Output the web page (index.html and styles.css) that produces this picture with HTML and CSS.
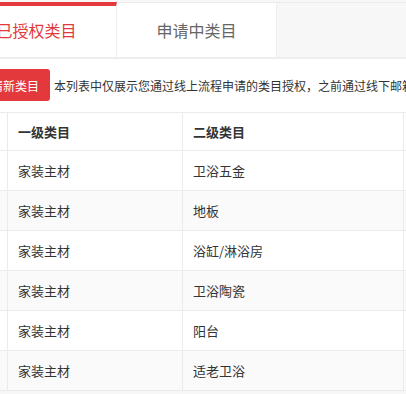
FILE: index.html
```html
<!DOCTYPE html>
<html lang="zh-CN">
<head>
    <meta charset="UTF-8">
    <title>类目授权</title>
    <link rel="stylesheet" href="styles.css">
</head>
<body>
    <div class="page">
        <div class="tabs">
            <div class="tab active">已授权类目</div>
            <div class="tab">申请中类目</div>
            <div class="tab-fill"></div>
        </div>
        <div class="panel">
            <div class="toolbar">
                <button class="btn-apply">申请新类目</button>
                <span class="tip">本列表中仅展示您通过线上流程申请的类目授权，之前通过线下邮箱申请的类目请联系运营</span>
            </div>
            <table class="cat-table">
                <thead>
                    <tr>
                        <th class="col-no"></th>
                        <th class="col-a">一级类目</th>
                        <th class="col-b">二级类目</th>
                        <th class="col-c">状态</th>
                    </tr>
                </thead>
                <tbody>
                    <tr><td></td><td>家装主材</td><td>卫浴五金</td><td>已授权</td></tr>
                    <tr><td></td><td>家装主材</td><td>地板</td><td>已授权</td></tr>
                    <tr><td></td><td>家装主材</td><td>浴缸/淋浴房</td><td>已授权</td></tr>
                    <tr><td></td><td>家装主材</td><td>卫浴陶瓷</td><td>已授权</td></tr>
                    <tr><td></td><td>家装主材</td><td>阳台</td><td>已授权</td></tr>
                    <tr><td></td><td>家装主材</td><td>适老卫浴</td><td>已授权</td></tr>
                </tbody>
            </table>
        </div>
    </div>
</body>
</html>
```

FILE: styles.css
```css
body {
    margin: 0;
    padding: 0;
    background-color: #f7f7f7;
    font-family: "Noto Sans CJK SC", "Noto Sans", sans-serif;
    color: #333;
    overflow: hidden;
}
.page {
    margin-left: -43px;
    width: 600px;
}
.tabs {
    display: flex;
    margin-top: 2px;
    height: 54px;
    background: #fff;
    border-top: 1px solid #ebebeb;
    border-bottom: 2px solid #eeeeee;
}
.tab {
    width: 160px;
    display: flex;
    align-items: center;
    justify-content: center;
    font-size: 16px;
    color: #666;
    background: #fff;
    border-right: 1px solid #eeeeee;
    box-sizing: border-box;
}
.tab.active {
    color: #e4393c;
    border-top: 4px solid #e4393c;
    margin-top: -1px;
    padding-bottom: 3px;
}
.tab-fill {
    flex: 1;
    background: #f7f7f7;
}
.panel {
    background: #fff;
    padding-top: 10px;
}
.toolbar {
    display: flex;
    align-items: center;
    padding-left: 11px;
    white-space: nowrap;
}
.btn-apply {
    height: 32px;
    padding: 0 11px;
    border: none;
    border-radius: 3px;
    background-color: #e4393c;
    color: #fff;
    font-family: inherit;
    font-size: 12px;
    cursor: pointer;
}
.tip {
    margin-left: 4px;
    font-size: 12px;
    color: #333;
}
.cat-table {
    margin-top: 11px;
    margin-left: 11px;
    border-collapse: collapse;
    font-size: 13px;
}
.cat-table th,
.cat-table td {
    border: 1px solid #ebebeb;
    padding: 0 10px;
    text-align: left;
    height: 39px;
}
.cat-table th {
    height: 37px;
    font-weight: bold;
    color: #333;
    background: #fff;
}
.cat-table td {
    color: #333;
}
.cat-table tbody tr:nth-child(even) td {
    background: #fafafa;
}
.col-no { width: 18px; }
.col-a { width: 154px; }
.col-b { width: 200px; }
.col-c { width: 120px; }
```
